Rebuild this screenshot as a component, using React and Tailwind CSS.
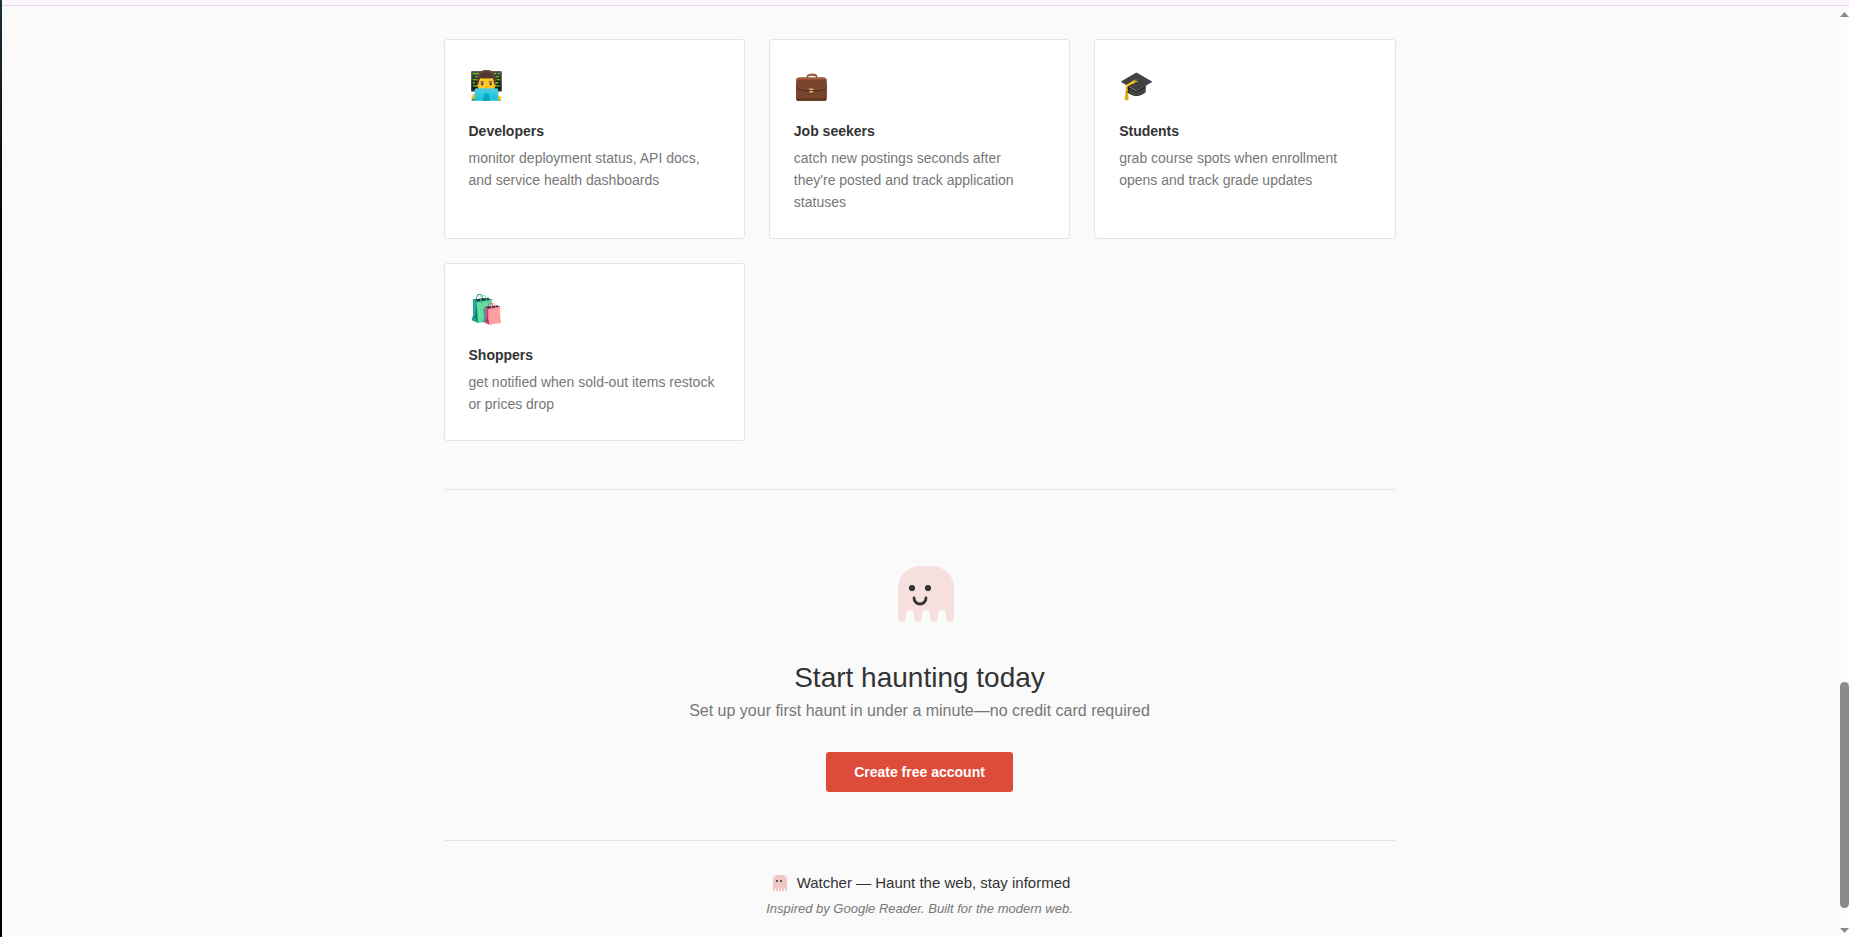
const audiences = [
  {
    emoji: "👨‍💻",
    title: "Developers",
    text: "monitor deployment status, API docs, and service health dashboards",
  },
  {
    emoji: "💼",
    title: "Job seekers",
    text: "catch new postings seconds after they're posted and track application statuses",
  },
  {
    emoji: "🎓",
    title: "Students",
    text: "grab course spots when enrollment opens and track grade updates",
  },
  {
    emoji: "🛍️",
    title: "Shoppers",
    text: "get notified when sold-out items restock or prices drop",
  },
];

export default function App() {
  return (
    <div className="min-h-screen flex bg-[#fafafa] text-[#333] font-['Liberation_Sans',Arial,sans-serif]">
      {/* Window edge */}
      <div className="w-0.5 shrink-0 bg-linear-to-b from-[#1c2f3d] via-black via-40% to-black" />

      <div className="flex-1 min-w-0 flex flex-col">
        <div className="h-1.5 shrink-0 bg-[#fdf4ff] border-b border-[#e3dce6]" />

        <div className="flex-1 flex">
          <main className="flex-1 min-w-0">
            <div className="max-w-[1000px] mx-auto px-6 pt-[33px]">
              <section className="grid grid-cols-3 gap-6 pb-12">
                {audiences.map((item) => (
                  <AudienceCard key={item.title} {...item} />
                ))}
              </section>

              <section className="flex flex-col items-center text-center border-t border-[#e5e5e5] pt-16 pb-12">
                <Ghost />
                <h2 className="mt-6 text-[28px] leading-[40px]">Start haunting today</h2>
                <p className="text-base leading-[26px] text-[#777]">
                  Set up your first haunt in under a minute—no credit card required
                </p>
                <a
                  href="#signup"
                  className="mt-7 px-7 py-[9px] rounded-[3px] bg-[#dd4b39] text-white text-sm leading-[22px] font-bold"
                >
                  Create free account
                </a>
              </section>

              <footer className="border-t border-[#e5e5e5] pt-[30px] pb-5 text-center">
                <p className="flex items-center justify-center gap-2 text-[15px] leading-6">
                  <MiniGhost />
                  Watcher — Haunt the web, stay informed
                </p>
                <p className="mt-[3px] text-[13px] leading-[21px] italic text-[#777]">
                  Inspired by Google Reader. Built for the modern web.
                </p>
              </footer>
            </div>
          </main>

          <ScrollTrack />
        </div>
      </div>
    </div>
  );
}

function AudienceCard({ emoji, title, text }) {
  return (
    <div className="bg-white border border-[#e5e5e5] rounded-[3px] px-6 pt-[23px] pb-[25px]">
      <div className="mb-3 text-[28px] leading-[45px]">{emoji}</div>
      <h3 className="mb-1 text-sm leading-[23px] font-bold">{title}</h3>
      <p className="text-sm leading-[22px] text-[#777]">{text}</p>
    </div>
  );
}

function Ghost() {
  return (
    <svg width="80" height="80" viewBox="0 0 80 80" aria-hidden="true">
      <path
        fill="#f6e0dd"
        d="M18 34a22 22 0 0 1 22-22h12a22 22 0 0 1 22 22v30a4 4 0 0 1-8 0v-4a4 4 0 0 0-8 0v4a4 4 0 0 1-8 0v-4a4 4 0 0 0-8 0v4a4 4 0 0 1-8 0v-4a4 4 0 0 0-8 0v4a4 4 0 0 1-8 0z"
      />
      <circle cx="32" cy="34" r="3.1" fill="#333" />
      <circle cx="48" cy="34" r="3.1" fill="#333" />
      <path d="M34 44a6 6 0 0 0 12 0" fill="none" stroke="#333" strokeWidth="2.8" strokeLinecap="round" />
    </svg>
  );
}

function MiniGhost() {
  return (
    <svg width="20" height="20" viewBox="-4 -2 20 20" aria-hidden="true">
      <path
        fill="#f1c5c0"
        d="M0 5a5 5 0 0 1 5-5h4a5 5 0 0 1 5 5v11h-2v-3h-1v3H9v-3H8v3H6v-3H5v3H3v-3H2v3H0z"
      />
      <path fill="#555" d="M3 5h2v2H3zM7 5h2v2H7z" />
    </svg>
  );
}

function ScrollTrack() {
  return (
    <div className="w-3 shrink-0 flex flex-col items-end bg-[#fcfcfc] py-1.5" aria-hidden="true">
      <svg width="9" height="5" viewBox="0 0 9 5">
        <path d="M4.5 0L9 5H0z" fill="#8b8b8b" />
      </svg>
      <div className="w-[9px] flex-1 flex flex-col pt-1.5 pb-5">
        <div className="grow-[745]" />
        <div className="grow-[255] rounded-full bg-[#8b8b8b]" />
      </div>
      <svg width="9" height="5" viewBox="0 0 9 5">
        <path d="M0 0h9L4.5 5z" fill="#8b8b8b" />
      </svg>
    </div>
  );
}
